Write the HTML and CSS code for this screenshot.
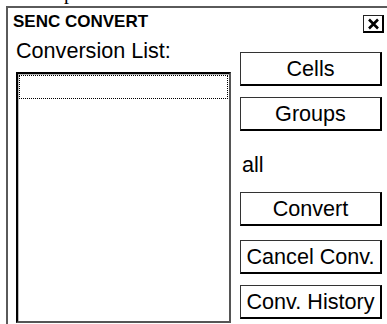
FILE: index.html
```html
<!DOCTYPE html>
<html>
<head>
<meta charset="utf-8">
<link rel="stylesheet" href="styles.css">
</head>
<body>
<span class="ghost">p</span>
<div class="window">
  <div class="titlebar">
    <span class="title">SENC CONVERT</span>
    <span class="close"><svg width="13" height="12" viewBox="0 0 13 12"><path d="M2 1.5 L11 10.5 M11 1.5 L2 10.5" stroke="#000" stroke-width="2.6" fill="none"/></svg></span>
  </div>
  <div class="main">
    <div class="left">
      <div class="label">Conversion List:</div>
      <div class="listbox">
        <div class="row focus"></div>
      </div>
    </div>
    <div class="right">
      <div class="btn">Cells</div>
      <div class="btn groups">Groups</div>
      <div class="all">all</div>
      <div class="btn convert">Convert</div>
      <div class="btn cancel">Cancel Conv.</div>
      <div class="btn history">Conv. History</div>
    </div>
  </div>
</div>
</body>
</html>
```
FILE: styles.css
```css
html, body {
  margin: 0;
  padding: 0;
  background: #fff;
  overflow: hidden;
  height: 324px;
}
body {
  font-family: "Liberation Sans", Arial, sans-serif;
  color: #000;
  position: relative;
}
.ghost {
  position: absolute;
  left: 64px;
  top: -19px;
  font-family: "Liberation Serif", serif;
  font-size: 20px;
  line-height: 22px;
}
.window {
  margin: 6px 0 0 6px;
  width: 381px;
  height: 330px;
  border-top: 2px solid #5a5a5a;
  border-left: 2px solid #5a5a5a;
  box-sizing: border-box;
  background: #fff;
}
.titlebar {
  display: flex;
  justify-content: space-between;
  align-items: flex-start;
  padding: 4px 3px 0 5px;
}
.title {
  font-weight: bold;
  font-size: 17px;
  line-height: 19px;
}
.close {
  margin-top: 3px;
  width: 21px;
  height: 18px;
  box-sizing: border-box;
  border: 1px solid #222;
  border-right: 2px solid #000;
  border-bottom: 2px solid #000;
  display: flex;
  align-items: center;
  justify-content: center;
}
.close svg { display: block; }
.main {
  display: flex;
}
.left {
  padding-left: 8px;
  width: 215px;
}
.label {
  font-size: 21.6px;
  line-height: 25px;
  margin-top: 5px;
}
.listbox {
  margin-top: 9px;
  height: 251px;
  box-sizing: border-box;
  border: 2px solid;
  border-color: #000 #555 #555 #000;
  box-shadow: inset 1px 1px 0 #bbb;
  padding: 1px;
}
.row {
  height: 24px;
  box-sizing: border-box;
}
.focus {
  border: 1px dotted #000;
}
.right {
  margin-left: 9px;
  padding-top: 19px;
  display: flex;
  flex-direction: column;
}
.btn {
  width: 142px;
  height: 34px;
  box-sizing: border-box;
  border: 1px solid #333;
  border-right: 2px solid #000;
  border-bottom: 2px solid #000;
  font-size: 21.6px;
  line-height: 25px;
  display: flex;
  align-items: center;
  justify-content: center;
  white-space: nowrap;
}
.groups { margin-top: 11px; }
.all {
  margin-top: 21px;
  font-size: 21.6px;
  line-height: 25px;
  padding-left: 2px;
}
.convert { margin-top: 15px; }
.cancel { margin-top: 14px; }
.history { margin-top: 11px; }
```
